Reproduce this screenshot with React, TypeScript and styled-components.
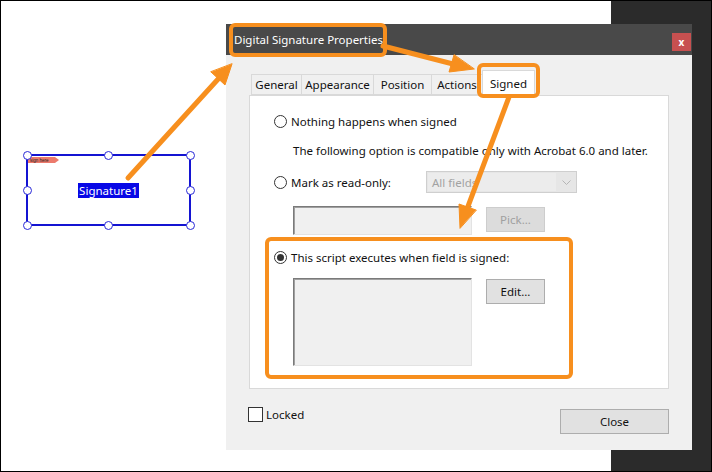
import styled, { createGlobalStyle } from 'styled-components';

const ORANGE = '#f78f1e';

const GlobalStyle = createGlobalStyle`
  html, body {
    margin: 0;
    padding: 0;
    background: #fff;
  }
  body {
    font-family: 'Noto Sans', 'Open Sans', sans-serif;
    font-size: 11.5px;
    color: #111;
  }
  * {
    box-sizing: border-box;
  }
`;

const Frame = styled.div`
  position: relative;
  width: 712px;
  height: 472px;
  border: 1px solid #000;
  display: flex;
  overflow: hidden;
`;

const Canvas = styled.div`
  flex: 1;
  position: relative;
  background: #fff;
`;

const DarkSide = styled.div`
  width: 100px;
  background: #2b2b2b;
`;

/* signature form field on the page */
const SigField = styled.div`
  position: absolute;
  left: 25px;
  top: 153px;
  width: 165px;
  height: 72px;
  border: 2px solid #1414d2;
  display: flex;
  align-items: center;
  justify-content: center;
`;

const Handle = styled.span<{ $x: number; $y: number }>`
  position: absolute;
  width: 9px;
  height: 9px;
  border-radius: 50%;
  background: #fff;
  border: 1.5px solid #2a2ad8;
  left: ${p => (p.$x === 0 ? '-5.5px' : p.$x === 1 ? 'calc(50% - 4.5px)' : 'calc(100% - 3.5px)')};
  top: ${p => (p.$y === 0 ? '-5.5px' : p.$y === 1 ? 'calc(50% - 4.5px)' : 'calc(100% - 3.5px)')};
`;

const SigLabel = styled.span`
  background: #0808e6;
  color: #fff;
  font-size: 11.5px;
  line-height: 15px;
  padding: 0 1px;
  margin-top: 1px;
`;

const Tag = styled.svg`
  position: absolute;
  left: 0;
  top: 0;
`;

/* dialog window */
const Dialog = styled.div`
  position: absolute;
  left: 225px;
  top: 23px;
  width: 466px;
  height: 426px;
  background: #f0f0f0;
  display: flex;
  flex-direction: column;
`;

const TitleBar = styled.div`
  height: 31px;
  background: #494949;
  display: flex;
  align-items: center;
  padding-left: 3px;
`;

const TitleText = styled.span`
  height: 34px;
  border: 4px solid ${ORANGE};
  border-radius: 6px;
  color: #fff;
  padding: 0 0 0 1px;
  display: flex;
  align-items: center;
  white-space: nowrap;
`;

const CloseX = styled.span`
  align-self: flex-start;
  margin: 9px 1px 0 auto;
  width: 19px;
  height: 18px;
  background: #c75050;
  color: #fff;
  font-size: 10px;
  font-weight: 700;
  display: flex;
  align-items: center;
  justify-content: center;
`;

const Body = styled.div`
  flex: 1;
  padding: 15px 23px 18px 23px;
  display: flex;
  flex-direction: column;
`;

const TabStrip = styled.div`
  display: flex;
  align-items: flex-end;
  height: 25px;
  padding-left: 2px;
`;

const Tab = styled.div<{ $w: number; $active?: boolean }>`
  position: relative;
  width: ${p => p.$w}px;
  height: ${p => (p.$active ? 26 : 21)}px;
  margin-bottom: ${p => (p.$active ? -1 : 0)}px;
  margin-right: -1px;
  border: 1px solid #d9d9d9;
  border-bottom: ${p => (p.$active ? 'none' : '1px solid #d9d9d9')};
  background: ${p => (p.$active ? '#fff' : '#f0f0f0')};
  z-index: ${p => (p.$active ? 2 : 1)};
  display: flex;
  align-items: center;
  justify-content: center;
  white-space: nowrap;
  ${p =>
    p.$active &&
    `&::after {
      content: '';
      position: absolute;
      left: -6px;
      right: -6px;
      top: -8px;
      bottom: -2px;
      border: 4px solid ${ORANGE};
      border-radius: 6px;
    }`}
`;

const Panel = styled.div`
  height: 294px;
  background: #fff;
  border: 1px solid #d9d9d9;
  padding: 17px 0 0 24px;
  display: flex;
  flex-direction: column;
`;

const Row = styled.div<{ $top?: number; $indent?: number; $h?: number }>`
  display: flex;
  align-items: ${p => (p.$h ? 'flex-start' : 'center')};
  margin-top: ${p => p.$top ?? 0}px;
  padding-left: ${p => p.$indent ?? 0}px;
  min-height: 16px;
  white-space: nowrap;
`;

const Radio = styled.span<{ $checked?: boolean }>`
  width: 13px;
  height: 13px;
  border-radius: 50%;
  border: 1px solid #333;
  background: #fff;
  margin-right: 4px;
  display: flex;
  align-items: center;
  justify-content: center;
  flex: none;
  &::after {
    content: '';
    display: ${p => (p.$checked ? 'block' : 'none')};
    width: 7px;
    height: 7px;
    border-radius: 50%;
    background: #333;
  }
`;

const Label = styled.span<{ $w?: number }>`
  width: ${p => (p.$w ? `${p.$w}px` : 'auto')};
`;

const Combo = styled.div`
  width: 151px;
  height: 22px;
  border: 1px solid #cfcfcf;
  background: #e6e6e6;
  display: flex;
`;

const ComboValue = styled.span`
  flex: 1;
  margin: 1px 0 1px 1px;
  background: #ececec;
  color: #a2a2a2;
  padding-left: 4px;
  display: flex;
  align-items: center;
`;

const ComboArrow = styled.span`
  width: 20px;
  display: flex;
  align-items: center;
  justify-content: center;
`;

const Field = styled.div<{ $h: number }>`
  width: 179px;
  height: ${p => p.$h}px;
  background: #f0f0f0;
  border-style: solid;
  border-width: 1px;
  border-color: #7a7a7a #e3e3e3 #e3e3e3 #7a7a7a;
  box-shadow: inset 1px 1px 0 #a0a0a0;
`;

const Button = styled.div<{ $w: number; $disabled?: boolean }>`
  width: ${p => p.$w}px;
  height: 25px;
  margin-left: ${p => (p.$w < 100 ? 14 : 0)}px;
  margin-top: 1px;
  background: ${p => (p.$disabled ? '#dcdcdc' : '#e1e1e1')};
  border: 1px solid ${p => (p.$disabled ? '#cdcdcd' : '#adadad')};
  color: ${p => (p.$disabled ? '#a0a0a0' : '#111')};
  display: flex;
  align-items: center;
  justify-content: center;
`;

const Highlight = styled.div`
  margin: 2px 0 0 -9px;
  width: 308px;
  height: 142px;
  border: 4px solid ${ORANGE};
  border-radius: 6px;
  padding: 8px 0 0 5px;
`;

const BottomRow = styled.div`
  margin-top: 19px;
  display: flex;
  justify-content: space-between;
  align-items: flex-start;
`;

const Check = styled.label`
  display: flex;
  align-items: center;
  margin: -1px 0 0 -1px;
  &::before {
    content: '';
    width: 13px;
    height: 13px;
    border: 1px solid #333;
    background: #fff;
    margin-right: 3px;
  }
`;

const Overlay = styled.svg`
  position: absolute;
  left: -1px;
  top: -1px;
  pointer-events: none;
  z-index: 10;
`;

const handles: [number, number][] = [
  [0, 0], [1, 0], [2, 0],
  [0, 1], [2, 1],
  [0, 2], [1, 2], [2, 2],
];

const tabs = [
  { label: 'General', w: 51 },
  { label: 'Appearance', w: 73 },
  { label: 'Position', w: 59 },
  { label: 'Actions', w: 52 },
];

const App: React.FC = () => (
  <>
    <GlobalStyle />
    <Frame>
      <Canvas>
        <SigField>
          <Tag width="32" height="8" viewBox="0 0 32 8">
            <polygon points="0,1 27,1 31,4 27,7 0,7" fill="#ec7a6c" />
            <text x="2" y="6" fontSize="4.5" fill="#222" fontFamily="Liberation Sans, sans-serif">sign here</text>
          </Tag>
          {handles.map(([x, y]) => (
            <Handle key={`${x}-${y}`} $x={x} $y={y} />
          ))}
          <SigLabel>Signature1</SigLabel>
        </SigField>
      </Canvas>
      <DarkSide />

      <Dialog>
        <TitleBar>
          <TitleText>Digital Signature Properties</TitleText>
          <CloseX>x</CloseX>
        </TitleBar>
        <Body>
          <TabStrip>
            {tabs.map(t => (
              <Tab key={t.label} $w={t.w}>{t.label}</Tab>
            ))}
            <Tab $w={53} $active>Signed</Tab>
          </TabStrip>
          <Panel>
            <Row>
              <Radio />
              <Label>Nothing happens when signed</Label>
            </Row>
            <Row $top={13} $indent={19}>
              The following option is compatible only with Acrobat 6.0 and later.
            </Row>
            <Row $top={13}>
              <Radio />
              <Label $w={135}>Mark as read-only:</Label>
              <Combo>
                <ComboValue>All fields</ComboValue>
                <ComboArrow>
                  <svg width="9" height="5" viewBox="0 0 9 5">
                    <polyline points="0.5,0.5 4.5,4.5 8.5,0.5" fill="none" stroke="#b5b5b5" strokeWidth="1" />
                  </svg>
                </ComboArrow>
              </Combo>
            </Row>
            <Row $top={13} $indent={19} $h={29}>
              <Field $h={29} />
              <Button $w={59} $disabled>Pick...</Button>
            </Row>
            <Highlight>
              <Row>
                <Radio $checked />
                <Label>This script executes when field is signed:</Label>
              </Row>
              <Row $top={13} $indent={19} $h={88}>
                <Field $h={88} />
                <Button $w={59}>Edit...</Button>
              </Row>
            </Highlight>
          </Panel>
          <BottomRow>
            <Check>Locked</Check>
            <Button $w={109}>Close</Button>
          </BottomRow>
        </Body>
      </Dialog>

      <Overlay width="712" height="472" viewBox="0 0 712 472">
        <g stroke={ORANGE} strokeWidth="5" strokeLinecap="round" fill={ORANGE}>
          <line x1="128" y1="178" x2="220" y2="77" />
          <polygon points="232,64 225,85 211,72" strokeWidth="1" />
          <line x1="383" y1="46" x2="453" y2="64" />
          <polygon points="474,69 449,72 454,55" strokeWidth="1" />
          <line x1="509" y1="97" x2="467" y2="209" />
          <polygon points="460,228 459,204 476,210" strokeWidth="1" />
        </g>
      </Overlay>
    </Frame>
  </>
);

export default App;
